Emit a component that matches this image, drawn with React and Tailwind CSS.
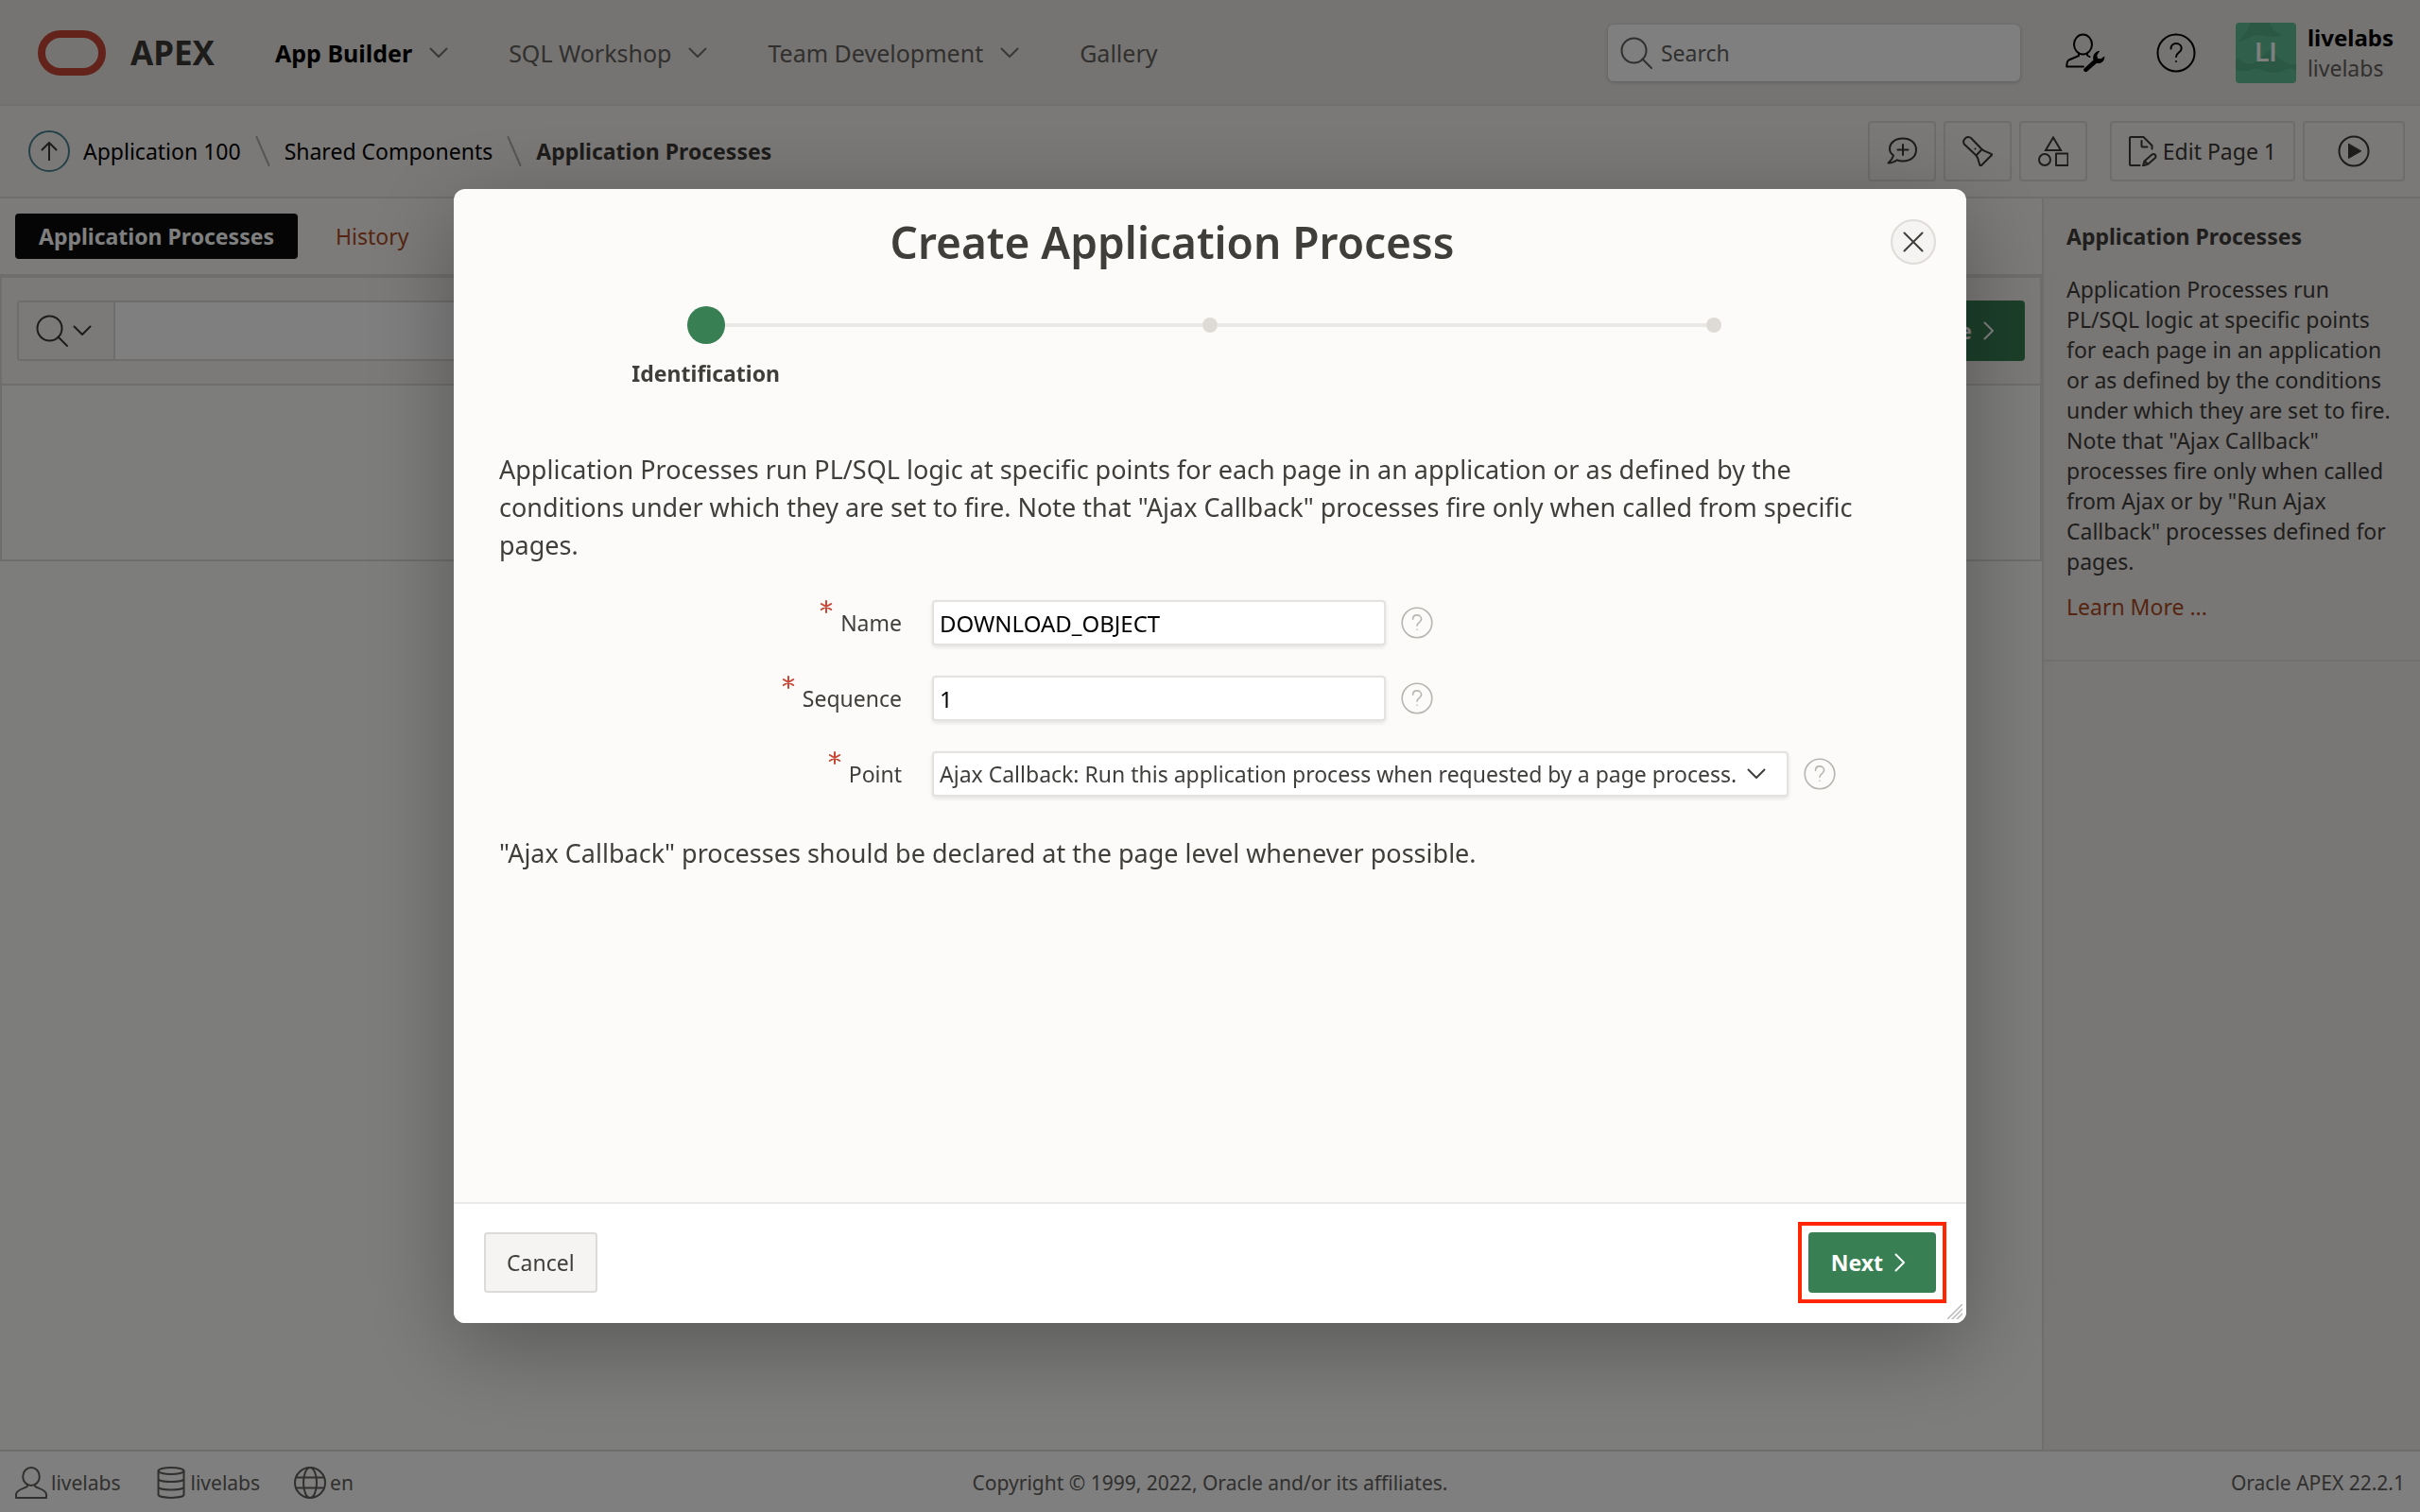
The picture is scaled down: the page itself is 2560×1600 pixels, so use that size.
function Icon({ size = "size-8", box = "0 0 32 32", width = 2, className = "", children }) {
  return (
    <svg
      viewBox={box}
      className={`shrink-0 ${size} ${className}`}
      fill="none"
      stroke="currentColor"
      strokeWidth={width}
      strokeLinejoin="round"
      strokeLinecap="round"
      aria-hidden="true"
    >
      {children}
    </svg>
  );
}

function ChevronDown({ className = "" }) {
  return (
    <Icon size="w-5 h-3" box="0 0 20 12" className={className}>
      <path d="M1.500 1.500 L10 10 L18.500 1.500" />
    </Icon>
  );
}

function ChevronRight() {
  return (
    <Icon size="w-3 h-5" box="0 0 12 20" width={2}>
      <path d="M1.500 1.500 L10 10 L1.500 18.500" />
    </Icon>
  );
}

function SearchIcon({ className = "" }) {
  return (
    <Icon size="size-9" box="0 0 36 36" className={className}>
      <circle cx="15.500" cy="15.500" r="13" />
      <path d="M24.500 24.500 L34 34" />
    </Icon>
  );
}

function HelpIcon({ size, width = 2 }) {
  return (
    <Icon size={size} box="0 0 42 42" width={width}>
      <circle cx="21" cy="21" r="19.500" />
      <path d="M15.500 16.500 C15.500 13 18 11 21 11 C24 11 26.700 13 26.700 16.300 C26.700 20.500 21 20.500 21 25" />
      <circle cx="21" cy="30" r="1" fill="currentColor" stroke="none" />
    </Icon>
  );
}

const NAV = [
  { label: "App Builder", menu: true, active: true },
  { label: "SQL Workshop", menu: true },
  { label: "Team Development", menu: true },
  { label: "Gallery" },
];

function Header() {
  return (
    <header className="flex h-28 items-center border-b-2 border-[#e3e0dd] bg-[#ebe8e4] pt-0.5 pr-7 pl-10">
      <a href="#home" className="flex items-center gap-[26px]" aria-label="Oracle APEX home">
        <span className="h-12 w-[72px] rounded-full border-8 border-[#c74634]" />
        <span className="text-[35px] leading-10 font-bold text-[#3a3835]">APEX</span>
      </a>
      <nav className="ml-16 flex items-center gap-16 text-[25px] leading-8">
        {NAV.map((n) => (
          <button
            key={n.label}
            type="button"
            className={`flex items-center gap-[18px] whitespace-nowrap ${n.active ? "font-bold text-black" : "text-[#62605c]"}`}
          >
            {n.label}
            {n.menu && <ChevronDown className="text-[#73706c]" />}
          </button>
        ))}
      </nav>
      <label className="ml-auto flex h-[60px] w-[436px] items-center gap-2 rounded-md bg-white px-3 text-[#62605c] shadow-[0_1px_4px_rgba(0,0,0,0.2)]">
        <SearchIcon className="text-[#62605c]" />
        <input
          type="search"
          aria-label="Search"
          placeholder="Search"
          className="w-full min-w-0 bg-transparent text-[23px] outline-none placeholder:text-[#62605c]"
        />
      </label>
      <button type="button" aria-label="Administration" className="ml-12 text-black">
        <Icon size="size-[42px]" box="0 0 42 42" width={2}>
          <ellipse cx="18.500" cy="12" rx="9.500" ry="10.500" />
          <path d="M14 21.500 V24 L3.500 28.500 C1.800 29.500 1.300 31 1.300 35.500 H19" />
          <path d="M23 21.500 V23.500 L25.500 25" />
          <path
            d="M20 40.500 C18.800 39.500 18.800 38.500 20 37.300 L29.500 28.500 C28.300 24.500 30.500 20 35.500 18.800 L36 19.300 L33.300 23.500 L34 26.800 L37.300 27.300 L41.300 24.500 C41.800 29.500 37.500 33 33 31.800 L23 40.500 C22 41.500 21 41.500 20 40.500 Z"
            fill="currentColor"
            stroke="none"
          />
        </Icon>
      </button>
      <button type="button" aria-label="Help" className="ml-[54px] text-black">
        <HelpIcon size="size-[42px]" />
      </button>
      <button type="button" className="ml-[42px] flex items-center gap-3 text-left">
        <span className="relative grid size-16 place-items-center overflow-hidden rounded bg-[#60c098] font-['Inter'] text-[27px] font-semibold text-white">
          <svg viewBox="0 0 64 64" className="absolute inset-0 size-16" fill="#57b18b" aria-hidden="true">
            <path d="M0 20 C8 17 12 10 15 0 H36 C40 9 44 12 50 13 C40 17 32 14 26 13 C18 12 10 20 0 20 Z" />
            <path d="M0 38 C6 37 9 46 18 43 C28 39 30 32 38 28 C43 34 48 44 64 44 V50 C54 46 50 52 42 53 C30 54 26 46 16 50 C10 53 5 50 0 50 Z" />
          </svg>
          <span className="relative">LI</span>
        </span>
        <span className="flex flex-col">
          <span className="text-2xl leading-8 font-bold text-black">livelabs</span>
          <span className="text-[23px] leading-8 text-[#62605c]">livelabs</span>
        </span>
      </button>
    </header>
  );
}

function Slash() {
  return (
    <Icon size="w-4 h-8" box="0 0 16 32" width={2} className="mx-[15px] text-[#b0adaa]">
      <path d="M1.500 1 L14.500 31" />
    </Icon>
  );
}

function ToolButton({ className, children, label }) {
  return (
    <button
      type="button"
      aria-label={label}
      className={`flex h-16 items-center justify-center rounded border-2 border-[#dddad7] text-[#3a3835] ${className}`}
    >
      {children}
    </button>
  );
}

function Breadcrumb() {
  return (
    <div className="flex items-center border-b-2 border-[#e0dcd9] bg-[#f5f2ef] py-4 pr-4 pl-[30px]">
      <nav aria-label="Breadcrumb" className="flex items-center text-[23px] leading-8 text-black">
        <a
          href="#up"
          aria-label="Up one level"
          className="mr-[14px] grid size-11 place-items-center rounded-full border-2 border-[#4a8391] text-[#3a3835]"
        >
          <Icon size="size-5" box="0 0 20 20">
            <path d="M10 19.500 V1 M2.500 8.500 L10 1 L17.500 8.500" />
          </Icon>
        </a>
        <a href="#application">Application 100</a>
        <Slash />
        <a href="#shared">Shared Components</a>
        <Slash />
        <span className="font-bold text-[#3a3835]">Application Processes</span>
      </nav>
      <div className="ml-auto flex gap-2">
        <ToolButton className="w-[72px]" label="Feedback">
          <Icon size="size-8">
            <path d="M7 20.500 C4.200 18.500 3 16.500 3 13.800 C3 7 9 2.500 17 2.500 C25 2.500 31 7 31 14.500 C31 22 25 26.500 17 26.500 C14.500 26.500 12.500 26 11 25.300 C8 27.500 5 28.500 1.500 28.500 C4.500 26 6 24 7 20.500 Z" />
            <path d="M17 9 V20 M11.500 14.500 H22.500" />
          </Icon>
        </ToolButton>
        <ToolButton className="w-[72px]" label="Search application">
          <Icon size="size-8">
            <path d="M1.800 8.500 C-0.500 4 4.500 -1 9 2 L20.500 14 L14.500 20.500 Z" />
            <path d="M20.500 14 C24 17 28 17 31.500 19.500 L19 32 C17 28.500 17.500 24 14.500 20.500" />
            <circle cx="13.500" cy="13.500" r="1" fill="currentColor" stroke="none" />
          </Icon>
        </ToolButton>
        <ToolButton className="mr-4 w-[72px]" label="Shared components">
          <Icon size="size-8">
            <path d="M16 1.500 L24 15 H8 Z" strokeLinejoin="miter" />
            <circle cx="7" cy="25" r="6" />
            <path d="M19 18.500 H31.500 V31 H19 Z" />
          </Icon>
        </ToolButton>
        <ToolButton className="px-[18px] text-[23px] leading-8">
          <Icon size="size-8" className="mr-1">
            <path d="M11.500 31 H2 C1.400 31 1 30.600 1 30 V2 C1 1.400 1.400 1 2 1 H15.500 L24.500 10 V13.500" />
            <path d="M13.500 5 V10.500 C13.500 11.100 13.900 11.500 14.500 11.500 H19.500" />
            <path d="M15 31.500 L16.500 26.500 L24.500 19.500 C27 18 29.500 20.500 28 23 L20.500 29.500 Z M17 26.500 L19.500 29.500" />
          </Icon>
          <span>Edit Page 1</span>
        </ToolButton>
        <ToolButton className="w-[108px]" label="Run page">
          <Icon size="size-[34px]" box="0 0 34 34">
            <circle cx="17" cy="17" r="15.500" />
            <path d="M11.500 9.500 V24.500 L24.500 17 Z" fill="currentColor" strokeWidth="1" />
          </Icon>
        </ToolButton>
      </div>
    </div>
  );
}

function PrimaryButton({ children }) {
  return (
    <button
      type="button"
      className="flex h-16 items-center gap-3 rounded bg-[#387f54] pr-8 pl-6 text-[23px] font-bold text-white"
    >
      {children}
      <ChevronRight />
    </button>
  );
}

function Report() {
  return (
    <main className="min-w-0 flex-1">
      <nav className="flex h-[82px] items-center gap-4 border-b-2 border-[#e0dcd9] bg-[#f9f6f4] px-4 text-[23px]">
        <a href="#processes" className="flex h-12 items-center rounded bg-[#0a0a0a] px-[25px] font-bold text-white">
          Application Processes
        </a>
        <a href="#history" className="flex h-12 items-center px-6 text-[#ac4a22]">
          History
        </a>
      </nav>
      <section className="border-2 border-[#e0dcd9]">
        <div className="flex h-[114px] items-center justify-between border-b-2 border-[#e0dcd9] bg-[#f6f4f1] px-4">
          <div className="flex h-16 w-[800px] overflow-hidden rounded border-2 border-[#dddad7]">
            <button
              type="button"
              aria-label="Search columns"
              className="flex w-[102px] items-center justify-center gap-1 border-r-2 border-[#dddad7] bg-[#f6f4f1] pr-1.5 text-[#3a3835]"
            >
              <SearchIcon />
              <ChevronDown />
            </button>
            <input type="text" aria-label="Search report" className="min-w-0 flex-1 bg-white px-3 text-[23px] outline-none" />
          </div>
          <PrimaryButton>Create</PrimaryButton>
        </div>
        <div className="h-46 bg-[#fbfaf8]" />
      </section>
    </main>
  );
}

function HelpPanel() {
  return (
    <aside className="w-[400px] shrink-0 border-l-2 border-[#e0dcd9] bg-[#f1eeeb] text-[23px] leading-8 text-[#3f3d3a]">
      <div className="border-b-2 border-[#e3e0dd] px-6 pt-6 pb-10">
        <h2 className="mb-6 font-bold">Application Processes</h2>
        <p className="mb-4">
          Application Processes run PL/SQL logic at specific points for each page in an application or as defined by the
          conditions under which they are set to fire. Note that "Ajax Callback" processes fire only when called from
          Ajax or by "Run Ajax Callback" processes defined for pages.
        </p>
        <a href="#learn" className="text-[#ac4a22]">
          Learn More ...
        </a>
      </div>
    </aside>
  );
}

function Footer() {
  return (
    <footer className="grid h-[66px] grid-cols-[1fr_auto_1fr] items-center border-t-2 border-[#e0dcd9] bg-white px-4 pt-0.5 text-[21px] leading-8 text-[#62605c]">
      <ul className="flex items-center gap-9">
        <li className="flex items-center gap-1">
          <Icon size="size-[34px]" box="0 0 34 34">
            <ellipse cx="17" cy="10.500" rx="8.800" ry="9.500" />
            <path d="M13 19 V20.500 C12.500 23 1 23.500 1 29.500 V33 H33 V29.500 C33 23.500 21.500 23 21 20.500 V19" />
          </Icon>
          livelabs
        </li>
        <li className="flex items-center gap-1">
          <Icon size="size-[34px]" box="0 0 34 34">
            <ellipse cx="17" cy="4.500" rx="13.500" ry="3.500" />
            <path d="M3.500 4.500 V29.500 C3.500 34 30.500 34 30.500 29.500 V4.500 M3.500 13 C3.500 17 30.500 17 30.500 13 M3.500 21.500 C3.500 25.500 30.500 25.500 30.500 21.500" />
          </Icon>
          livelabs
        </li>
        <li className="flex items-center gap-1">
          <Icon size="size-[34px]" box="0 0 34 34">
            <circle cx="17" cy="17" r="16" />
            <ellipse cx="17" cy="17" rx="7" ry="16" />
            <path d="M2 11.500 H32 M2 22.500 H32" />
          </Icon>
          en
        </li>
      </ul>
      <p>Copyright © 1999, 2022, Oracle and/or its affiliates.</p>
      <p className="text-right">Oracle APEX 22.2.1</p>
    </footer>
  );
}

function Stepper() {
  const steps = ["Identification", "Source", "Conditions"];
  return (
    <ol className="grid grid-cols-3">
      {steps.map((s, i) => (
        <li key={s} aria-label={s} aria-current={i === 0 ? "step" : undefined} className="flex flex-col items-center gap-[15px]">
          <span className="flex h-10 w-full items-center">
            <span className={`h-1 flex-1 ${i === 0 ? "" : "bg-[#ece8e5]"}`} />
            <span className={`rounded-full ${i === 0 ? "size-10 bg-[#387f54]" : "size-4 bg-[#dedbd7]"}`} />
            <span className={`h-1 flex-1 ${i === steps.length - 1 ? "" : "bg-[#ece8e5]"}`} />
          </span>
          {i === 0 && <span className="text-[23px] leading-8 font-bold">{s}</span>}
        </li>
      ))}
    </ol>
  );
}

function Field({ id, label, children }) {
  return (
    <div className="grid grid-cols-[426px_1fr] gap-8">
      <label htmlFor={id} className="flex justify-end gap-2 text-[23px]">
        <Icon size="size-[14px]" box="0 0 14 14" width={2} className="text-[#c74634]">
          <path d="M7 1 V13 M1.800 4 L12.200 10 M12.200 4 L1.800 10" />
        </Icon>
        <span className="leading-12">{label}</span>
      </label>
      <div className="flex items-center gap-4">
        {children}
        <button type="button" aria-label={`Help for ${label}`} className="text-[#b8b5b1]">
          <HelpIcon size="size-[34px]" width={2} />
        </button>
      </div>
    </div>
  );
}

const FIELD =
  "h-12 rounded border-2 border-[#e4e2df] bg-white px-1.5 outline-none shadow-[0_2px_4px_rgba(0,0,0,0.1)]";

function Dialog() {
  return (
    <div className="fixed inset-0 grid place-items-center bg-black/50">
      <div
        role="dialog"
        aria-modal="true"
        aria-labelledby="dialog-title"
        className="relative flex h-3/4 w-5/8 flex-col overflow-hidden rounded-xl bg-[#fcfbf9] text-[#403e3b] shadow-[0_24px_96px_rgba(0,0,0,0.3)]"
      >
        <div className="flex items-center pt-8 pr-8">
          <h1 id="dialog-title" className="flex-1 text-center text-[46px] leading-12 font-semibold">
            Create Application Process
          </h1>
          <button
            type="button"
            aria-label="Close"
            className="grid size-12 place-items-center rounded-full border-2 border-[#dfdcd9] bg-[#f5f4f2]"
          >
            <Icon size="size-6" box="0 0 24 24" width={2}>
              <path d="M2.500 2.500 L21.500 21.500 M21.500 2.500 L2.500 21.500" />
            </Icon>
          </button>
        </div>
        <div className="flex-1 pt-11">
          <Stepper />
          <div className="px-12 pt-[66px]">
            <p className="pr-3 text-[27px] leading-10">
              Application Processes run PL/SQL logic at specific points for each page in an application or as defined by
              the conditions under which they are set to fire. Note that "Ajax Callback" processes fire only when called
              from specific pages.
            </p>
            <form className="flex flex-col gap-8 pt-[38px] pb-10">
              <Field id="name" label="Name">
                <input id="name" defaultValue="DOWNLOAD_OBJECT" className={`${FIELD} w-[480px] text-2xl text-black`} />
              </Field>
              <Field id="sequence" label="Sequence">
                <input id="sequence" defaultValue="1" className={`${FIELD} w-[480px] text-2xl text-black`} />
              </Field>
              <Field id="point" label="Point">
                <div className="relative">
                  <select id="point" className={`${FIELD} block w-[906px] appearance-none text-[23px]`}>
                    <option>Ajax Callback: Run this application process when requested by a page process.</option>
                  </select>
                  <ChevronDown className="pointer-events-none absolute top-[18px] right-6" />
                </div>
              </Field>
            </form>
            <p className="text-[27px] leading-10">
              "Ajax Callback" processes should be declared at the page level whenever possible.
            </p>
          </div>
        </div>
        <div className="flex items-center justify-between border-t-2 border-[#ebe9e8] bg-white px-8 pt-[30px] pb-8">
          <button
            type="button"
            className="h-16 rounded border-2 border-[#dddbd9] bg-[#f5f4f2] px-[22px] text-[23px]"
          >
            Cancel
          </button>
          <div className="relative">
            <PrimaryButton>Next</PrimaryButton>
            <span className="pointer-events-none absolute -inset-[11px] border-4 border-[#ff2600]" />
          </div>
        </div>
        <Icon size="size-4" box="0 0 16 16" width={1.5} className="absolute right-1 bottom-1 text-[#b9b9b9]">
          <path d="M0 16 L16 0 M5 16 L16 5 M10 16 L16 10" />
        </Icon>
      </div>
    </div>
  );
}

export default function App() {
  return (
    <div className="flex min-h-screen flex-col bg-[#fbfaf7] font-['Noto_Sans','Open_Sans',sans-serif]">
      <Header />
      <Breadcrumb />
      <div className="flex flex-1">
        <Report />
        <HelpPanel />
      </div>
      <Footer />
      <Dialog />
    </div>
  );
}
